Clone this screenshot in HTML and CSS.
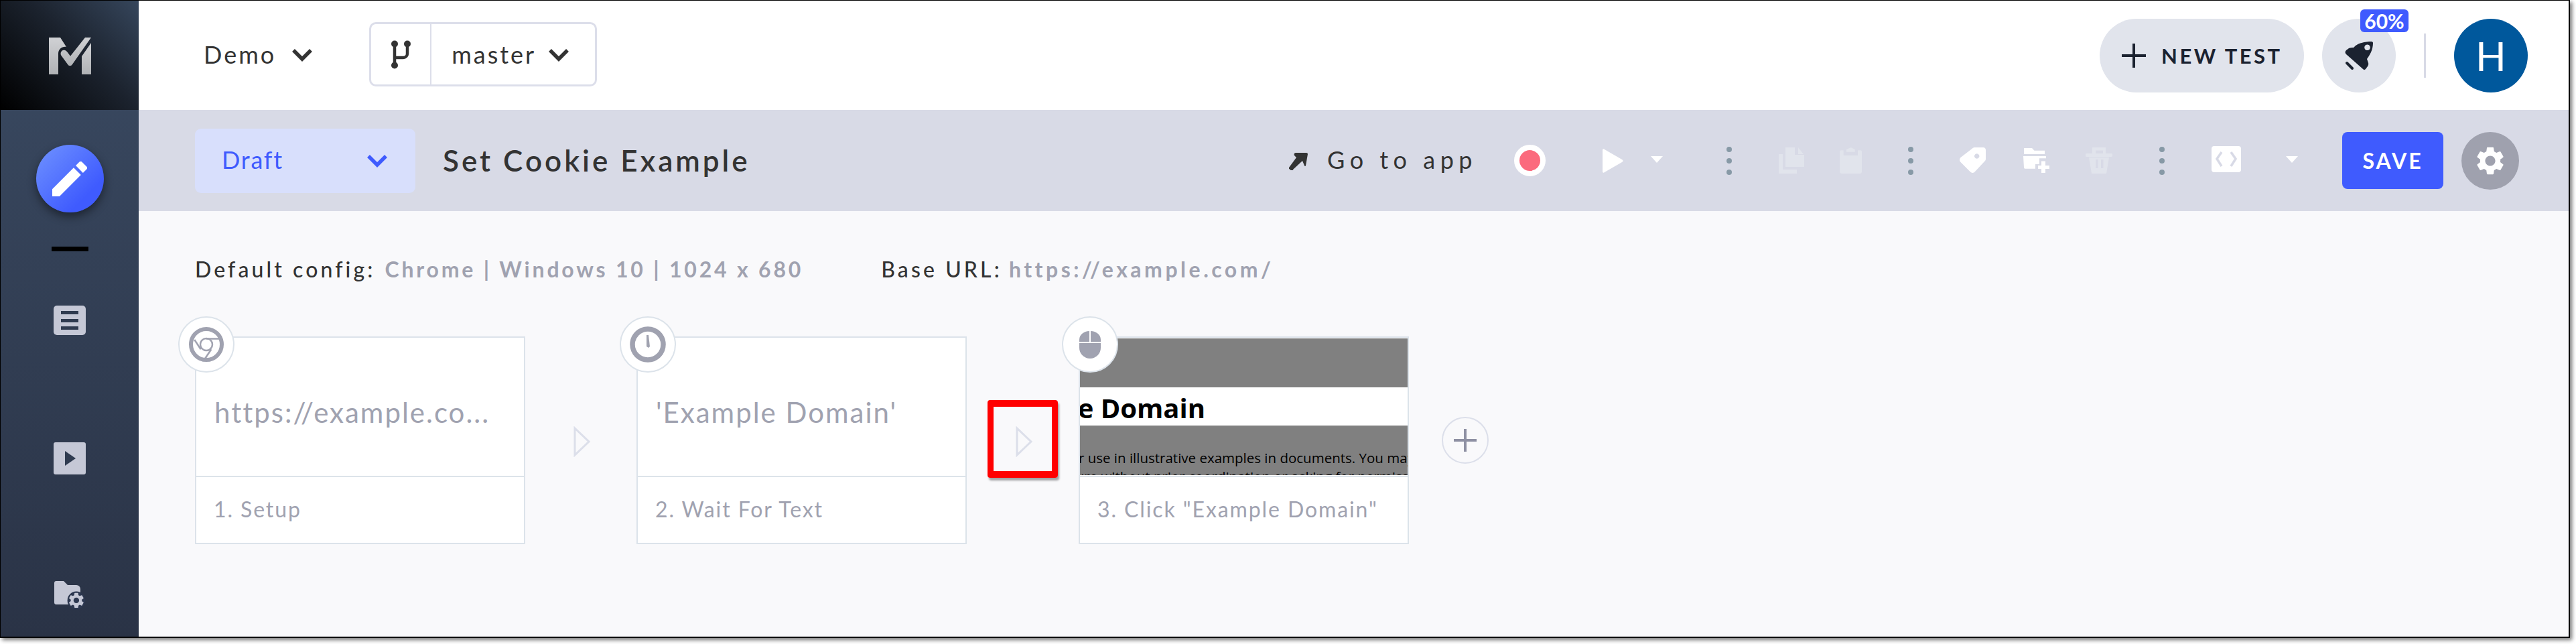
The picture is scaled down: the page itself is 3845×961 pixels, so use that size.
FILE: index.html
```html
<!DOCTYPE html>
<html lang="en">
<head>
<meta charset="utf-8">
<title>Set Cookie Example</title>
<link rel="stylesheet" href="styles.css">
</head>
<body>
<div class="window">
  <aside class="sidebar">
    <div class="logo">
      <svg class="logo-mark" viewBox="0 0 63 55"><defs><linearGradient id="lg" x1="0" y1="0" x2="0" y2="1"><stop offset="0" stop-color="#d0d1d4"/><stop offset="1" stop-color="#b0b2b5"/></linearGradient></defs><g fill="url(#lg)"><path d="M0 0H17L26 14C20 13 14 17 14 24V55H0Z"/><path d="M54 0H63L35 40C33 43 30 43 28 40L18.500 27C16 23 19 18 23 18.700C26 19 28 22 32 27.700Z"/><path d="M63 8V55H49V28Z"/></g></svg>
    </div>
    <nav class="side-nav">
      <div class="pen-btn"><svg viewBox="3 3 18 18" class="pen"><path fill="#fff" d="M3 17.25V21h3.75L17.81 9.94l-3.75-3.75L3 17.25zM20.71 7.04a1 1 0 0 0 0-1.41l-2.34-2.34a1 1 0 0 0-1.41 0l-1.83 1.83 3.75 3.75 1.83-1.83z"/></svg></div>
      <div class="active-bar"></div>
      <svg class="nav-list" viewBox="0 0 48 44"><rect width="48" height="44" rx="5" fill="#c5c8d6"/><path fill="#2f3b50" d="M11 8h26v5H11zM11 20h26v5H11zM11 31h26v5H11z"/></svg>
      <svg class="nav-play" viewBox="0 0 48 48"><rect width="48" height="48" rx="3" fill="#c5c8d6"/><path fill="#2f3b50" d="M17 13l16 11-16 11z"/></svg>
      <svg class="nav-folder" viewBox="0 0 47 43"><path fill="#c5c8d6" d="M0 3a3 3 0 0 1 3-3h11l6 6h13a6 6 0 0 1 6 6v23H3a3 3 0 0 1-3-3z"/><g transform="translate(19 15) scale(1.16)"><circle cx="12" cy="12" r="11.5" fill="#2d3850"/><path fill="#c5c8d6" d="M19.14 12.94c.04-.3.06-.61.06-.94 0-.32-.02-.64-.07-.94l2.03-1.58c.18-.14.23-.41.12-.61l-1.92-3.32c-.12-.22-.37-.29-.59-.22l-2.39.96c-.5-.38-1.03-.7-1.62-.94l-.36-2.54c-.04-.24-.24-.41-.48-.41h-3.84c-.24 0-.43.17-.47.41l-.36 2.54c-.59.24-1.13.57-1.62.94l-2.39-.96c-.22-.08-.47 0-.59.22L2.74 8.87c-.12.21-.08.47.12.61l2.03 1.58c-.05.3-.09.63-.09.94s.02.64.07.94l-2.03 1.58c-.18.14-.23.41-.12.61l1.92 3.32c.12.22.37.29.59.22l2.39-.96c.5.38 1.03.7 1.62.94l.36 2.54c.05.24.24.41.48.41h3.84c.24 0 .44-.17.47-.41l.36-2.54c.59-.24 1.13-.56 1.62-.94l2.39.96c.22.08.47 0 .59-.22l1.92-3.32c.12-.22.07-.47-.12-.61l-2.01-1.58zM12 15.6c-1.98 0-3.6-1.62-3.6-3.6s1.62-3.6 3.6-3.6 3.6 1.62 3.6 3.6-1.62 3.6-3.6 3.6z"/></g></svg>
    </nav>
  </aside>
  <main class="main">
    <header class="topbar">
      <div class="project">Demo<svg class="chev chev-dark" viewBox="0 0 32 20"><path d="M3 3l13 13L29 3"/></svg></div>
      <div class="branch">
        <div class="branch-icon"><svg viewBox="0 0 29 43" class="branch-svg"><circle cx="5" cy="5.500" r="5"/><circle cx="24" cy="5.500" r="5"/><circle cx="5" cy="37.500" r="5"/><path fill="none" stroke="#333" stroke-width="4.500" d="M5 6v32M24 6v14a6 6 0 0 1-6 6H5"/></svg></div>
        <div class="branch-name">master<svg class="chev chev-dark chev-branch" viewBox="0 0 32 20"><path d="M3 3l13 13L29 3"/></svg></div>
      </div>
      <div class="top-actions">
        <div class="new-test"><svg class="plus" viewBox="0 0 36 36"><path d="M16 0h4v16h16v4H20v16h-4V20H0v-4h16z"/></svg><span>NEW TEST</span></div>
        <div class="rocket-btn">
          <svg class="rocket" viewBox="0 0 43 44"><path fill="#1b2230" fill-rule="evenodd" d="M40 1C41 1 42 2 42 3C42 8 41 12 39 17C37 21 35 24 33 27L35 33C35.500 35 35 36 34 38L31 42C30 43.500 28 43.500 27 42L2 20C0 18 0 16 2 14L6 11C8 10 10 10 13 10C16 7 19 4.500 25 3C30 1.500 35 1 40 1ZM33.500 5.500a4.300 4.300 0 1 0 .01 0Z"/><path stroke="#1b2230" stroke-width="4" stroke-linecap="round" d="M3 33l8 8"/></svg>
          <span class="badge">60%</span>
        </div>
        <div class="vline"></div>
        <div class="avatar">H</div>
      </div>
    </header>
    <section class="toolbar">
      <div class="status">Draft<svg class="chev chev-blue" viewBox="0 0 32 20"><path d="M3 3l13 13L29 3"/></svg></div>
      <h1 class="title">Set Cookie Example</h1>
      <div class="tools">
        <svg class="goto-arrow" viewBox="0 0 28 26"><path fill="#333" d="M10 0h16a2 2 0 0 1 2 2l-3 17a1 1 0 0 1-2 0l-3-7L6 25a2 2 0 0 1-4 0l-2-1a2 2 0 0 1 0-2l11-15-3-3c-1-2 0-4 2-4z"/></svg>
        <span class="goto">Go to app</span>
        <span class="record"></span>
        <svg class="play" viewBox="0 0 31 36"><path fill="#fff" d="M0 2c0-2 2-2 3-1l26 15c2 1 2 3 0 4L3 35c-1 1-3 1-3-1z"/></svg>
        <span class="caret caret-a"></span>
        <span class="dots dots-a"><i></i><i></i><i></i></span>
        <svg class="copy" viewBox="0 0 38 39"><path fill="#e1e4ec" d="M10 0H24V11H38V29H10ZM29 0L37 10H29ZM0 10H6V33H27V39H0Z"/></svg>
        <svg class="paste" viewBox="0 0 33 39"><path fill="#e1e4ec" d="M2 4.300H5.700V12H27V4.300H31a2 2 0 0 1 2 2V36a3 3 0 0 1-3 3H3a3 3 0 0 1-3-3V6.300a2 2 0 0 1 2-2ZM10 6.700V3L16.700 0 22.700 3V6.700Z"/></svg>
        <span class="dots dots-b"><i></i><i></i><i></i></span>
        <svg class="tag" viewBox="0 0 39 39"><path fill="#fff" fill-rule="evenodd" d="M19 1.500C20 .5 21 0 22.500 0H35C37.500 0 39 1.500 39 4V17C39 18.500 38.500 19.500 37.500 20.500L23 36C21 38.500 18 38.500 16 36.500L1.500 22C-.5 20-.5 17 1.500 15ZM25.700 9.300a3.700 3.700 0 1 0 .01 0Z"/></svg>
        <svg class="folder" viewBox="0 0 39 37"><path fill="#fff" d="M1 0H13L16.500 3.700H32V9H1ZM0 12H34V15.300H24V24H18V30.700H3C1.500 30.700 1 30 1 29ZM27 19.500H33V26H39V31H33V37H27V31H22V26H27Z"/></svg>
        <svg class="trash" viewBox="0 0 40 39"><path fill="#e1e4ec" fill-rule="evenodd" d="M10 0H30V9H38a2.500 2.500 0 0 1 0 5H2a2.500 2.500 0 0 1 0-5H10ZM15 4.500V9H26V4.500ZM5 15H35L31 39H9ZM15 18V31H18.500V18ZM23 18V31H26.500V18Z"/></svg>
        <span class="dots dots-c"><i></i><i></i><i></i></span>
        <svg class="code" viewBox="0 0 44 39"><rect width="44" height="39" rx="4" fill="#fff"/><path fill="none" stroke="#d8dae6" stroke-width="3.500" d="M15 9l-7 10 7 11M29 9l7 10-7 11"/></svg>
        <span class="caret caret-b"></span>
        <button class="save">SAVE</button>
        <div class="gear-btn"><svg class="gear" viewBox="2.500 2 19 20"><path fill="#fff" d="M19.14 12.94c.04-.3.06-.61.06-.94 0-.32-.02-.64-.07-.94l2.03-1.58c.18-.14.23-.41.12-.61l-1.92-3.32c-.12-.22-.37-.29-.59-.22l-2.39.96c-.5-.38-1.03-.7-1.62-.94l-.36-2.54c-.04-.24-.24-.41-.48-.41h-3.84c-.24 0-.43.17-.47.41l-.36 2.54c-.59.24-1.13.57-1.62.94l-2.39-.96c-.22-.08-.47 0-.59.22L2.74 8.87c-.12.21-.08.47.12.61l2.03 1.58c-.05.3-.09.63-.09.94s.02.64.07.94l-2.03 1.58c-.18.14-.23.41-.12.61l1.92 3.32c.12.22.37.29.59.22l2.39-.96c.5.38 1.03.7 1.62.94l.36 2.54c.05.24.24.41.48.41h3.84c.24 0 .44-.17.47-.41l.36-2.54c.59-.24 1.13-.56 1.62-.94l2.39.96c.22.08.47 0 .59-.22l1.92-3.32c.12-.22.07-.47-.12-.61l-2.01-1.58zM12 15.6c-1.98 0-3.6-1.62-3.6-3.6s1.62-3.6 3.6-3.6 3.6 1.62 3.6 3.6-1.62 3.6-3.6 3.6z"/></svg></div>
      </div>
    </section>
    <section class="canvas">
      <div class="config">
        <span class="cfg-label">Default config:</span><span class="cfg-value cfg-browser">Chrome | Windows 10 | 1024 x 680</span>
        <span class="cfg-label cfg-base">Base URL:</span><span class="cfg-value cfg-url">https://example.com/</span>
      </div>
      <div class="steps">
        <article class="step">
          <div class="step-icon"><svg class="glyph" viewBox="0 0 54 54" fill="none" stroke="#a0a2b0"><circle cx="27" cy="27" r="23" stroke-width="6"/><circle cx="27" cy="27" r="9" stroke-width="2.500"/><path stroke-width="2.500" d="M27 18.500H47M9.300 20L18.700 34.300M24.300 49.300L34.300 34.300"/></svg></div>
          <div class="step-body"><span class="step-text">https://example.co...</span></div>
          <div class="step-label">1. Setup</div>
        </article>
        <svg class="connector" viewBox="0 0 26 46"><path fill="none" stroke="#dcdfea" stroke-width="3" d="M2 3l21 20L2 43z"/></svg>
        <article class="step">
          <div class="step-icon"><svg class="glyph" viewBox="0 0 54 54" fill="none" stroke="#a0a2b0"><circle cx="27" cy="27" r="23" stroke-width="7.500"/><path fill="#a0a2b0" stroke="none" d="M25 13h3l2 17-2 2-3-2z"/></svg></div>
          <div class="step-body"><span class="step-text">'Example Domain'</span></div>
          <div class="step-label">2. Wait For Text</div>
        </article>
        <div class="connector-hot"><svg class="connector-in" viewBox="0 0 26 46"><path fill="none" stroke="#dcdfea" stroke-width="3" d="M2 3l21 20L2 43z"/></svg></div>
        <article class="step">
          <div class="step-icon"><svg class="glyph-mouse" viewBox="0 0 32 41"><path fill="#a0a2b0" d="M0 13a15 13 0 0 1 15-13v16H0zM17 0a15 13 0 0 1 15 13v3H17zM0 18h32v7a16 16 0 0 1-32 0z"/></svg></div>
          <div class="shot">
            <div class="shot-band shot-head"></div>
            <div class="shot-title"><span>Example Domain</span></div>
            <div class="shot-band shot-copy"><p>This domain is for use in illustrative examples in documents. You may use this</p><p>domain in literature without prior coordination or asking for permission.</p></div>
          </div>
          <div class="step-label">3. Click "Example Domain"</div>
        </article>
        <div class="add-step"><svg viewBox="0 0 34 34" class="add-plus"><path fill="#8e90a3" d="M15 0h4v15h15v4H19v15h-4V19H0v-4h15z"/></svg></div>
      </div>
    </section>
  </main>
</div>
</body>
</html>
```
FILE: styles.css
```css
* { box-sizing: border-box; }
html, body { margin: 0; padding: 0; background: #fff; }
body { width: 3845px; height: 961px; overflow: hidden; font-family: Lato, "Noto Sans", sans-serif; color: #333; }
svg { display: block; flex: none; }
.window { display: flex; width: 3836px; height: 952px; border: 1px solid #000; border-width: 1px 2px 2px 1px; box-shadow: 3px 3px 6px rgba(0,0,0,.55); overflow: hidden; }

.sidebar { width: 206px; flex: none; display: flex; flex-direction: column; background: linear-gradient(180deg, #3a4a62, #2a3346); }
.logo { height: 163px; display: flex; align-items: center; justify-content: center; background: linear-gradient(45deg, #000 0%, #1b222d 55%, #36465c 100%); }
.logo-mark { width: 63px; height: 55px; margin-top: 1px; }
.side-nav { display: flex; flex-direction: column; align-items: center; padding-top: 52px; }
.pen-btn { width: 101px; height: 101px; border-radius: 50%; background: linear-gradient(135deg, #7093ff, #3f5bfe 75%); box-shadow: 0 6px 14px rgba(0,0,0,.45); display: flex; align-items: center; justify-content: center; }
.pen { width: 52px; height: 52px; }
.active-bar { width: 55px; height: 7px; background: #000; margin-top: 51px; }
.nav-list { width: 48px; height: 44px; margin-top: 81px; }
.nav-play { width: 48px; height: 48px; margin-top: 160px; }
.nav-folder { width: 47px; height: 43px; margin-top: 159px; }

.main { flex: 1; min-width: 0; display: flex; flex-direction: column; }
.topbar { height: 163px; flex: none; display: flex; align-items: center; background: #fff; padding: 0 0 3px 97px; }
.project { display: flex; align-items: center; font-size: 36px; letter-spacing: 3px; }
.chev { fill: none; stroke-width: 5.500; }
.chev-dark { width: 32px; height: 20px; stroke: #333; margin-left: 23px; margin-top: 2px; }
.chev-branch { margin-left: 18px; }
.chev-blue { width: 32px; height: 20px; stroke: #3f5bfe; }
.branch { display: flex; height: 96px; margin-left: 84px; border: 3px solid #dcdeea; border-radius: 10px; }
.branch-icon { width: 90px; display: flex; align-items: center; justify-content: center; border-right: 2px solid #dcdeea; }
.branch-svg { width: 29px; height: 43px; fill: #333; }
.branch-name { display: flex; align-items: center; padding-left: 30px; width: 244px; font-size: 36px; letter-spacing: 3px; }
.top-actions { margin: 3px 0 0 auto; display: flex; align-items: center; padding-right: 61px; }
.new-test { width: 305px; height: 110px; border-radius: 55px; background: #e1e4ec; display: flex; align-items: center; padding-left: 33px; color: #1b2230; font-size: 31px; font-weight: 700; letter-spacing: 3.500px; }
.plus { width: 36px; height: 36px; fill: #1b2230; margin-right: 23px; }
.rocket-btn { position: relative; width: 110px; height: 110px; margin-left: 27px; border-radius: 50%; background: #e1e4ec; display: flex; align-items: center; justify-content: center; }
.rocket { width: 43px; height: 44px; }
.badge { position: absolute; left: 57px; top: -14px; width: 72px; height: 34px; border-radius: 6px; background: #3f5bfe; color: #fff; font-size: 30px; font-weight: 700; line-height: 34px; text-align: center; }
.vline { width: 3px; height: 66px; background: #d8dae6; margin-left: 42px; }
.avatar { width: 110px; height: 110px; margin-left: 42px; border-radius: 50%; background: #00589c; color: #fff; font-size: 60px; display: flex; align-items: center; justify-content: center; }

.toolbar { height: 151px; flex: none; display: flex; align-items: center; background: #d8dae6; padding-left: 84px; }
.status { width: 329px; height: 96px; border-radius: 9px; background: #d8dffc; color: #3f5bfe; display: flex; align-items: center; justify-content: space-between; padding: 0 41px 3px 40px; font-size: 36px; letter-spacing: 1.800px; }
.status .chev { margin-top: 3px; }
.title { margin: 0 0 2px 41px; font-size: 44px; font-weight: 600; letter-spacing: 4px; color: #333; }
.tools { margin-left: auto; display: flex; align-items: center; padding-right: 74px; }
.goto-arrow { width: 28px; height: 26px; margin-top: 3px; }
.goto { font-size: 36px; letter-spacing: 7.500px; margin-left: 29px; margin-top: -3px; }
.record { width: 47px; height: 47px; border-radius: 50%; background: #fb6a7d; border: 8px solid #fff; margin-left: 55px; }
.play { width: 31px; height: 36px; margin-left: 85px; }
.caret { width: 0; height: 0; border-left: 9px solid transparent; border-right: 9px solid transparent; border-top: 10px solid #fff; margin-top: -4px; }
.caret-a { margin-left: 41px; }
.dots { display: flex; flex-direction: column; gap: 9px; }
.dots i { width: 8px; height: 8px; border-radius: 50%; background: #8799a6; }
.dots-a { margin-left: 95px; }
.copy { width: 38px; height: 39px; margin-left: 70px; }
.paste { width: 33px; height: 39px; margin-left: 53px; }
.dots-b { margin-left: 69px; }
.tag { width: 39px; height: 39px; margin-left: 69px; }
.folder { width: 39px; height: 37px; margin-left: 56px; }
.trash { width: 40px; height: 39px; margin-left: 54px; }
.dots-c { margin-left: 70px; }
.code { width: 44px; height: 39px; margin-left: 70px; margin-top: -4px; }
.caret-b { margin-left: 67px; }
.save { width: 151px; height: 85px; margin-left: 66px; border: 0; border-radius: 8px; background: #3f5bfe; color: #fff; font-family: inherit; font-size: 32px; font-weight: 700; letter-spacing: 3px; }
.gear-btn { width: 86px; height: 86px; margin-left: 27px; border-radius: 50%; background: #9fa1ae; display: flex; align-items: center; justify-content: center; }
.gear { width: 44px; height: 42px; }

.canvas { flex: 1; background: #f9f9fb; padding: 67px 0 0 84px; }
.config { display: flex; align-items: baseline; font-size: 32px; font-weight: 500; letter-spacing: 4.100px; height: 40px; line-height: 40px; color: #333; }
.cfg-value { color: #a0a2b0; font-weight: 700; letter-spacing: 3.800px; }
.cfg-browser { margin-left: 14px; }
.cfg-base { margin-left: 116px; }
.cfg-url { margin-left: 10px; letter-spacing: 4.500px; }
.steps { display: flex; align-items: center; margin-top: 80px; }
.step { position: relative; width: 493px; height: 310px; flex: none; display: flex; flex-direction: column; background: #fff; border: 2px solid #dce3ea; }
.step-icon { position: absolute; left: -27px; top: -32px; z-index: 1; width: 84px; height: 84px; border-radius: 50%; background: #fff; border: 2px solid #dce3ea; display: flex; align-items: center; justify-content: center; }
.glyph { width: 54px; height: 54px; }
.glyph-mouse { width: 32px; height: 41px; }
.step-body { height: 206px; display: flex; align-items: center; padding: 16px 0 0 27px; }
.step-text { font-size: 42px; letter-spacing: 2px; color: #a0a2b0; }
.step-label { flex: 1; display: flex; align-items: center; padding: 0 0 3px 26px; border-top: 2px solid #dce3ea; font-size: 32px; letter-spacing: 1.900px; color: #a0a2b0; }
.connector { width: 26px; height: 46px; margin: 4px 68px 0 72px; }
.connector-hot { width: 105px; height: 116px; margin: 0 31px 4px; border: 10px solid #f00; border-left-width: 9px; border-right-width: 9px; border-radius: 4px; box-shadow: 2px 4px 3px rgba(0,0,0,.35); display: flex; align-items: center; justify-content: center; }
.connector-in { width: 26px; height: 46px; margin: 8px 0 0 4px; }
.shot { height: 206px; overflow: hidden; display: flex; flex-direction: column; background: #fff; }
.shot-band { background: #808080; flex: none; }
.shot-head { height: 73px; margin-top: 1px; }
.shot-title { height: 57px; overflow: hidden; display: flex; justify-content: flex-end; white-space: nowrap; }
.shot-title span { font-family: "Open Sans", sans-serif; font-weight: 700; font-size: 40px; line-height: 62px; color: #000; margin-right: 302px; }
.shot-copy { height: 74px; overflow: hidden; font-family: "Open Sans", sans-serif; font-size: 20.500px; line-height: 28px; color: #000; padding-top: 34px; white-space: nowrap; }
.shot-copy p { margin: 0 0 0 -164px; }
.add-step { width: 70px; height: 70px; margin-left: 49px; border-radius: 50%; border: 2px solid #dcdfea; display: flex; align-items: center; justify-content: center; }
.add-plus { width: 34px; height: 34px; }
```
